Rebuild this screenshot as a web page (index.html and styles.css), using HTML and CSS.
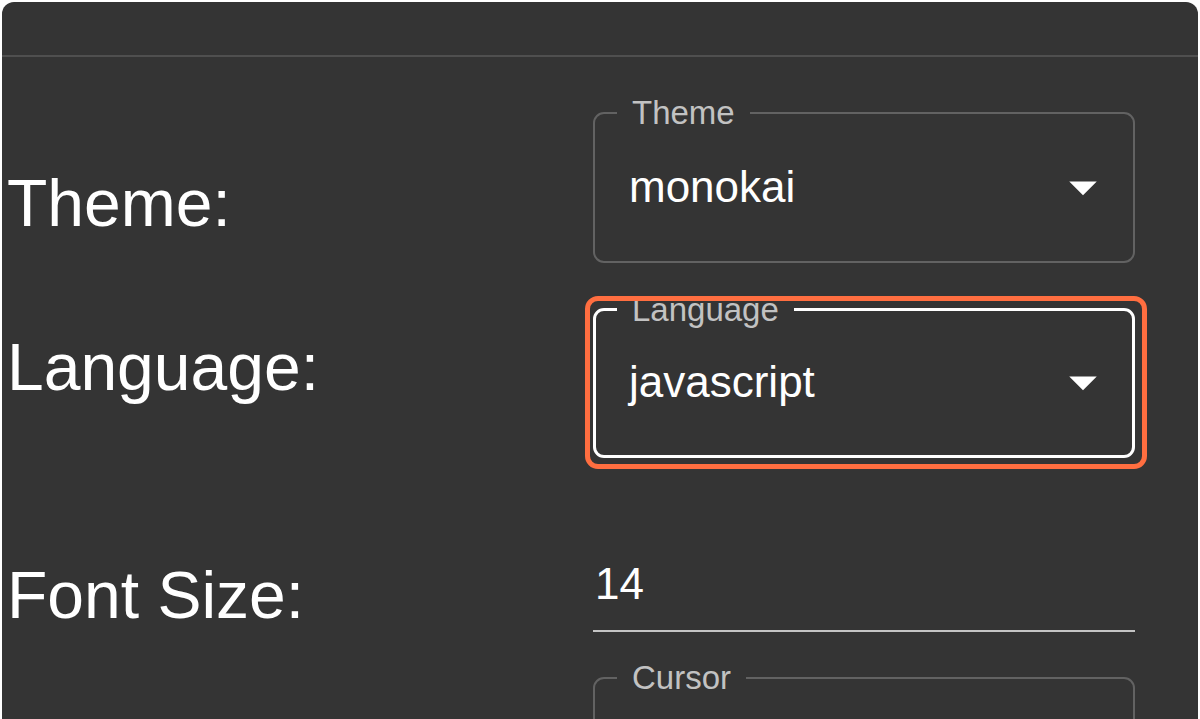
FILE: index.html
```html
<!DOCTYPE html>
<html lang="en">
<head>
<meta charset="utf-8">
<title>Editor Settings</title>
<link rel="stylesheet" href="styles.css">
</head>
<body>
<div class="dialog">
  <div class="dialog-title"></div>
  <div class="dialog-content">
    <div class="form-grid">
      <div class="row-label label-first">Theme:</div>
      <div class="field-wrap wrap-first">
        <fieldset class="field">
          <legend>Theme</legend>
          <div class="select">
            <span class="value">monokai</span>
            <svg class="arrow" viewBox="0 0 24 24" width="66" height="66"><path d="M7 10l5 5 5-5z" fill="#ffffff"/></svg>
          </div>
        </fieldset>
      </div>

      <div class="row-label label-second">Language:</div>
      <div class="field-wrap wrap-second">
        <fieldset class="field field-focused">
          <legend>Language</legend>
          <div class="select select-focused">
            <span class="value">javascript</span>
            <svg class="arrow" viewBox="0 0 24 24" width="66" height="66"><path d="M7 10l5 5 5-5z" fill="#ffffff"/></svg>
          </div>
        </fieldset>
        <div class="highlight"></div>
      </div>

      <div class="row-label label-third">Font Size:</div>
      <div class="text-field wrap-third">
        <span class="value">14</span>
      </div>

      <div class="row-label label-fourth"></div>
      <div class="field-wrap wrap-fourth">
        <fieldset class="field">
          <legend>Cursor</legend>
          <div class="select"></div>
        </fieldset>
      </div>
    </div>
  </div>
</div>
</body>
</html>
```

FILE: styles.css
```css
html, body {
  margin: 0;
  padding: 0;
  height: 100%;
  overflow: hidden;
  background: #ffffff;
}

body {
  font-family: "Liberation Sans", Arial, sans-serif;
  color: #ffffff;
}

.dialog {
  margin: 2px 2px 0 2px;
  min-height: 100vh;
  background: #343434;
  border-radius: 12px 12px 0 0;
}

.dialog-title {
  height: 53px;
  border-bottom: 2px solid #4f4f4f;
}

.dialog-content {
  padding: 40px 0 0 5px;
}

.form-grid {
  display: grid;
  grid-template-columns: 586px 542px;
  align-items: start;
}

.row-label {
  font-size: 66px;
  line-height: 66px;
  color: #ffffff;
  white-space: nowrap;
}

.label-first { margin-top: 73px; }
.label-second { margin-top: 71px; }
.label-third { margin-top: 104px; }
.label-fourth { margin-top: 103px; }

.wrap-first { margin-top: 0; }
.wrap-second { margin-top: 31px; }
.wrap-third { margin-top: 104px; }
.wrap-fourth { margin-top: 30px; }

.field-wrap {
  position: relative;
}

.field {
  margin: 0;
  padding: 0;
  min-width: 0;
  border: 2px solid #626262;
  border-radius: 11px;
}

.field legend {
  margin-left: 22px;
  padding: 0 15px;
  font-size: 33px;
  line-height: 31px;
  color: #c2c2c2;
}

.field-focused {
  border: 3px solid #ffffff;
}

.field-focused legend {
  margin-left: 21px;
}

.select {
  box-sizing: border-box;
  height: 133px;
  padding: 0 17px 15px 34px;
  display: flex;
  align-items: center;
  justify-content: space-between;
}

.select-focused {
  height: 130px;
  padding: 0 16px 16px 33px;
}

.value {
  font-size: 44px;
  line-height: 44px;
  color: #ffffff;
}

.arrow {
  display: block;
  flex: none;
}

.text-field {
  padding-bottom: 24px;
  border-bottom: 2px solid #c4c4c4;
}

.text-field .value {
  display: block;
  padding-left: 2px;
}

.highlight {
  position: absolute;
  left: -8px;
  top: 2px;
  right: -12px;
  bottom: -11px;
  border: 5px solid #ff6e40;
  border-radius: 13px;
  pointer-events: none;
}
```
